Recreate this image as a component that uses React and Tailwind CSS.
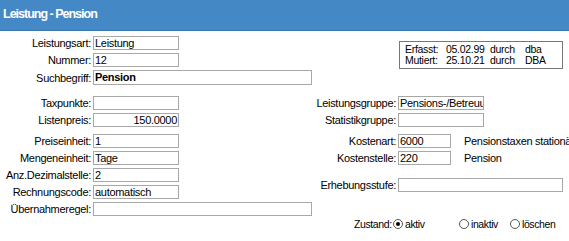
import React from "react";

const font = { fontFamily: '"Liberation Sans", Arial, sans-serif' };

// Read-only field that looks like the old form inputs
const Field = ({ w = "w-[86px]", value = "", bold, right, h = "h-[14px]" }) => (
  <div
    className={`${w} ${h} shrink-0 overflow-hidden whitespace-nowrap border border-[#a8a8a8] bg-white px-[1px] text-[11px] leading-[12px] tracking-[-0.3px] text-black ${
      bold ? "font-bold" : ""
    } ${right ? "text-right" : ""}`}
  >
    {value}
  </div>
);

const Row = ({ label, labelW = "w-[91px]", children }) => (
  <div className="flex items-center">
    <span className={`${labelW} shrink-0 text-right text-[11px] leading-[12px] tracking-[-0.3px] text-black`}>
      {label}
    </span>
    <div className="ml-[2px] flex items-center">{children}</div>
  </div>
);

const Radio = ({ checked, label, w }) => (
  <div className={`${w} flex shrink-0 items-center`}>
    <span className="flex h-[10px] w-[10px] items-center justify-center rounded-full border border-[#555] bg-white">
      {checked && <span className="h-[4px] w-[4px] rounded-full bg-black" />}
    </span>
    <span className="ml-[2px]">{label}</span>
  </div>
);

export default function App() {
  return (
    <div className="h-[241px] w-[569px] overflow-hidden bg-white" style={font}>
      {/* Title bar */}
      <div className="flex h-[31px] items-center border-b border-[#3a77b0] bg-[#4588c6] pl-[3px] pb-[1px]">
        <span className="text-[12.5px] font-bold tracking-[-1px] text-white">Leistung - Pension</span>
      </div>

      {/* Section 1 */}
      <div className="mt-[5px] flex items-start">
        <div className="flex w-[316px] shrink-0 flex-col gap-[3px]">
          <Row label="Leistungsart:">
            <Field value="Leistung" />
          </Row>
          <Row label="Nummer:">
            <Field value="12" />
          </Row>
          <Row label="Suchbegriff:">
            <Field w="w-[219px]" h="h-[15px]" value="Pension" bold />
          </Row>
        </div>
        <div className="ml-[83px] mt-[5px] w-[164px] border border-[#777] py-[2px] pl-[5px] text-[10.5px] leading-[11px] tracking-[-0.3px] text-black">
          <div className="flex">
            <span className="w-[41px] shrink-0">Erfasst:</span>
            <span className="w-[44px] shrink-0">05.02.99</span>
            <span className="w-[35px] shrink-0">durch</span>
            <span>dba</span>
          </div>
          <div className="flex">
            <span className="w-[41px] shrink-0">Mutiert:</span>
            <span className="w-[44px] shrink-0">25.10.21</span>
            <span className="w-[35px] shrink-0">durch</span>
            <span>DBA</span>
          </div>
        </div>
      </div>

      {/* Section 2 */}
      <div className="mt-[11px] flex items-start">
        <div className="flex w-[316px] shrink-0 flex-col gap-[3px]">
          <Row label="Taxpunkte:">
            <Field />
          </Row>
          <Row label="Listenpreis:">
            <Field value="150.0000" right />
          </Row>
        </div>
        <div className="flex flex-col gap-[3px]">
          <Row label="Leistungsgruppe:" labelW="w-[80px]">
            <Field value="Pensions-/Betreuung" />
          </Row>
          <Row label="Statistikgruppe:" labelW="w-[80px]">
            <Field />
          </Row>
        </div>
      </div>

      {/* Section 3 */}
      <div className="mt-[7px] flex items-start">
        <div className="flex w-[316px] shrink-0 flex-col gap-[3px]">
          <Row label="Preiseinheit:">
            <Field value="1" />
          </Row>
          <Row label="Mengeneinheit:">
            <Field value="Tage" />
          </Row>
          <Row label="Anz.Dezimalstelle:">
            <Field value="2" />
          </Row>
          <Row label="Rechnungscode:">
            <Field value="automatisch" />
          </Row>
          <Row label="Übernahmeregel:">
            <Field w="w-[219px]" />
          </Row>
        </div>
        <div className="flex flex-col gap-[3px]">
          <Row label="Kostenart:" labelW="w-[80px]">
            <Field w="w-[53px]" value="6000" />
            <span className="ml-[13px] whitespace-nowrap text-[11px] leading-[12px] tracking-[-0.3px]">
              Pensionstaxen stationär
            </span>
          </Row>
          <Row label="Kostenstelle:" labelW="w-[80px]">
            <Field w="w-[53px]" value="220" />
            <span className="ml-[13px] text-[11px] leading-[12px] tracking-[-0.3px]">Pension</span>
          </Row>
          <div className="mt-[10px]">
            <Row label="Erhebungsstufe:" labelW="w-[80px]">
              <Field w="w-[165px]" />
            </Row>
          </div>
        </div>
      </div>

      {/* Zustand */}
      <div className="mt-[1px] flex h-[14px] items-center pl-[354px] text-[10.5px] leading-[12px] tracking-[-0.4px] text-black">
        <span className="w-[39px] shrink-0">Zustand:</span>
        <Radio checked label="aktiv" w="w-[66px]" />
        <Radio label="inaktiv" w="w-[51px]" />
        <Radio label="löschen" w="w-[59px]" />
      </div>
    </div>
  );
}
